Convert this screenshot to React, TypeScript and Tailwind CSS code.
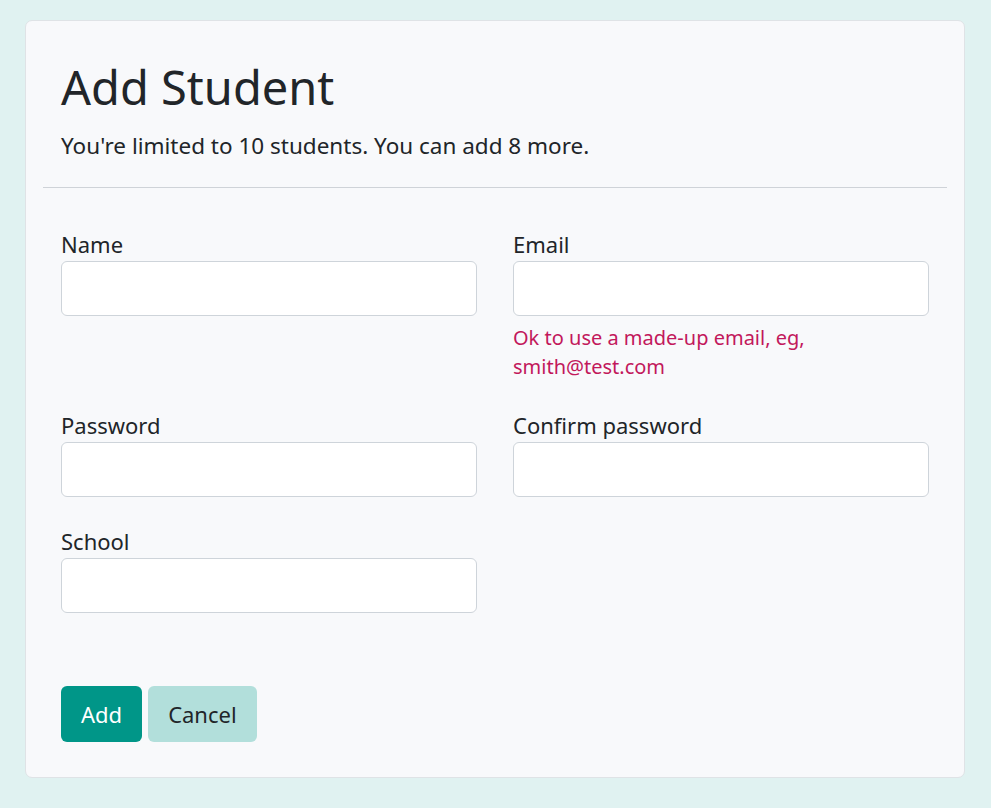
import React from 'react';

const Field = ({ label, type = 'text', help }: { label: string; type?: string; help?: React.ReactNode }) => (
  <div className="flex flex-col">
    <label className="mb-[2px] text-[22px] leading-[30px] text-[#212529]">{label}</label>
    <input
      type={type}
      className="h-[55px] w-full rounded-[6px] border border-[#ced4da] bg-white px-4 text-[22px] outline-none"
    />
    {help && <div className="mt-[7px] text-[20px] leading-[29px] text-[#c2185b]">{help}</div>}
  </div>
);

export default function App() {
  return (
    <div className="min-h-screen bg-[#e0f2f1] pl-[25px] pr-[26px] pt-[20px] pb-[30px] font-['Noto_Sans',sans-serif]">
      <div className="rounded-[7px] border border-[#dfe3e6] bg-[#f8f9fb]">
        <div className="px-[17px]">
          <div className="px-[18px] pt-[38px]">
            <h1 className="text-[47px] leading-[56px] text-[#212529]">Add Student</h1>
            <p className="mt-[14px] pb-[24px] text-[22.5px] leading-[34px] text-[#212529]">
              You're limited to 10 students. You can add 8 more.
            </p>
          </div>
          <hr className="border-t border-[#cfd3d8]" />
        </div>
        <div className="px-[35px] pt-[41px] pb-[35px]">
          <div className="grid grid-cols-2 gap-x-[36px] gap-y-[29px]">
            <Field label="Name" />
            <Field label="Email" type="email" help={<>Ok to use a made-up email, eg,<br />smith@test.com</>} />
            <Field label="Password" type="password" />
            <Field label="Confirm password" type="password" />
            <Field label="School" />
          </div>
          <div className="mt-[73px] flex gap-[6px]">
            <button className="h-[56px] rounded-[6px] bg-[#009688] px-[20px] text-[22px] text-white">Add</button>
            <button className="h-[56px] rounded-[6px] bg-[#b2dfdb] px-[20px] text-[22px] text-[#212529]">Cancel</button>
          </div>
        </div>
      </div>
    </div>
  );
}
